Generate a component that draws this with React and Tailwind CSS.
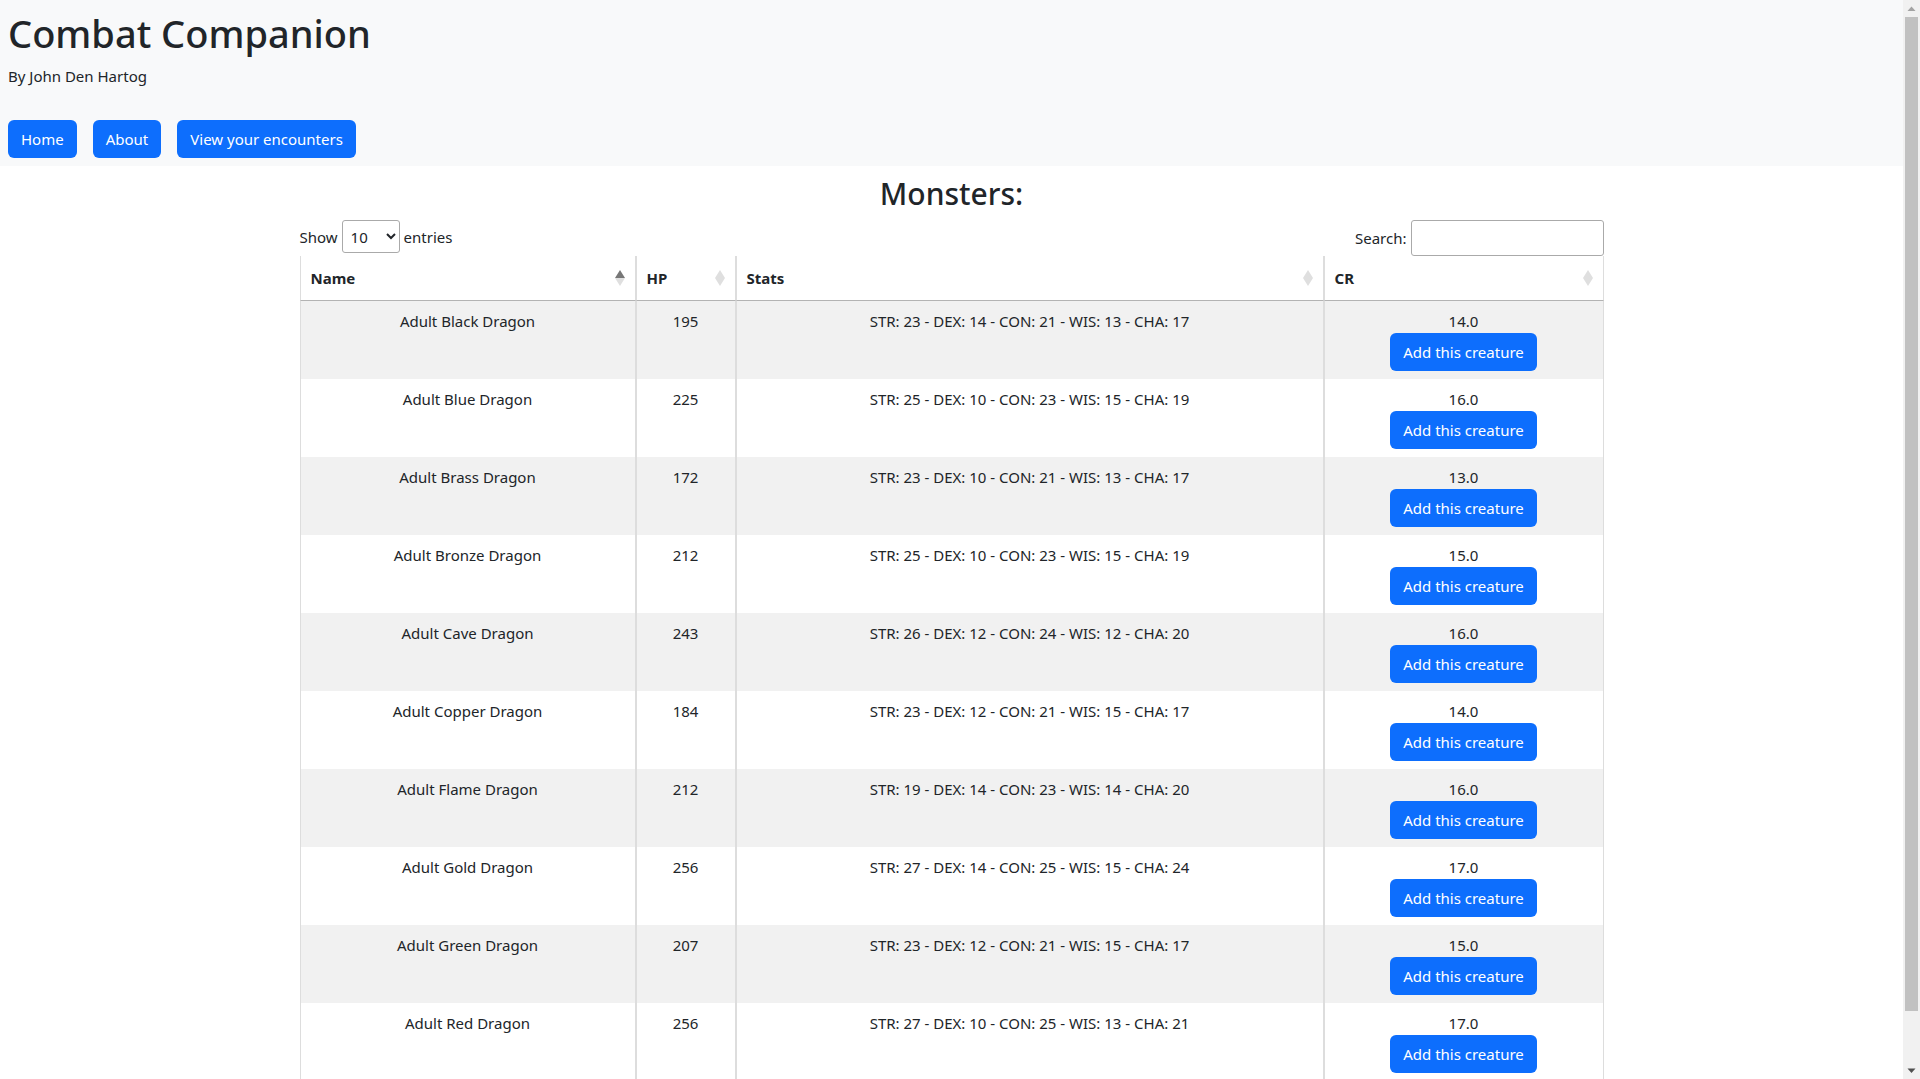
import { useState } from "react";

const monsters = [
  ["Adult Black Dragon", 195, [23, 14, 21, 13, 17], "14.0"],
  ["Adult Blue Dragon", 225, [25, 10, 23, 15, 19], "16.0"],
  ["Adult Brass Dragon", 172, [23, 10, 21, 13, 17], "13.0"],
  ["Adult Bronze Dragon", 212, [25, 10, 23, 15, 19], "15.0"],
  ["Adult Cave Dragon", 243, [26, 12, 24, 12, 20], "16.0"],
  ["Adult Copper Dragon", 184, [23, 12, 21, 15, 17], "14.0"],
  ["Adult Flame Dragon", 212, [19, 14, 23, 14, 20], "16.0"],
  ["Adult Gold Dragon", 256, [27, 14, 25, 15, 24], "17.0"],
  ["Adult Green Dragon", 207, [23, 12, 21, 15, 17], "15.0"],
  ["Adult Red Dragon", 256, [27, 10, 25, 13, 21], "17.0"],
];

const columns = [
  { label: "Name", width: "w-[336px]", sorted: true },
  { label: "HP", width: "w-[100px]" },
  { label: "Stats", width: "" },
  { label: "CR", width: "w-[280px]" },
];

const statNames = ["STR", "DEX", "CON", "WIS", "CHA"];

function formatStats(values) {
  return values.map((v, i) => `${statNames[i]}: ${v}`).join(" - ");
}

function SortIcon({ sorted }) {
  return (
    <svg width="10" height="16" viewBox="0 0 10 16" aria-hidden="true">
      <path d="M5 0 L10 8 H0 Z" fill={sorted ? "#777777" : "#dfdfdf"} />
      <path d="M0 8 H10 L5 16 Z" fill="#dfdfdf" />
    </svg>
  );
}

function NavLink({ children }) {
  return (
    <a
      href="#"
      className="flex h-[38px] items-center rounded-md bg-[#0d6efd] px-[13px] whitespace-nowrap text-white hover:bg-[#0b5ed7]"
    >
      {children}
    </a>
  );
}

function Scrollbar() {
  return (
    <div className="flex w-[17px] shrink-0 flex-col items-center bg-[#f1f1f1]" aria-hidden="true">
      <svg width="17" height="17" viewBox="0 0 17 17">
        <path d="M8.5 6.5 L12.5 11 H4.5 Z" fill="#a3a3a3" />
      </svg>
      <div className="w-[13px] grow-[994] basis-0 bg-[#c1c1c1]" />
      <div className="grow-[51] basis-0" />
      <svg width="17" height="17" viewBox="0 0 17 17">
        <path d="M4.5 6.5 H12.5 L8.5 11 Z" fill="#505050" />
      </svg>
    </div>
  );
}

export default function App() {
  const [query, setQuery] = useState("");
  const visible = monsters.filter(([name]) => name.toLowerCase().includes(query.toLowerCase()));

  return (
    <div className="flex h-screen overflow-hidden bg-white font-['Noto_Sans','Open_Sans',sans-serif] text-[15px] leading-6 text-[#212529]">
      <div className="min-w-0 flex-1 overflow-hidden">
        <header className="bg-[#f8f9fa] p-2">
          <h1 className="mb-1.5 text-[38px] leading-[50px] font-medium">Combat Companion</h1>
          <p className="mb-8">By John Den Hartog</p>
          <nav className="flex gap-4">
            <NavLink>Home</NavLink>
            <NavLink>About</NavLink>
            <NavLink>View your encounters</NavLink>
          </nav>
        </header>

        <main className="mx-auto max-w-[1320px] p-2">
          <h2 className="mb-1.5 text-center text-[30px] leading-[40px] font-medium">Monsters:</h2>

          <div className="flex items-start justify-between">
            <label className="flex items-center gap-1">
              Show
              <select className="h-[33px] w-[58px] rounded-[3px] border border-[#aaaaaa] bg-transparent p-1">
                <option>10</option>
                <option>25</option>
                <option>50</option>
                <option>100</option>
              </select>
              entries
            </label>
            <label className="flex items-center gap-1">
              Search:
              <input
                type="search"
                value={query}
                onChange={(e) => setQuery(e.target.value)}
                className="h-9 w-[193px] rounded-[3px] border border-[#aaaaaa] bg-transparent p-1"
              />
            </label>
          </div>

          <table className="w-full table-fixed border-separate border-spacing-0">
            <thead>
              <tr>
                {columns.map((c) => (
                  <th
                    key={c.label}
                    aria-sort={c.sorted ? "ascending" : undefined}
                    className={`${c.width} border-r border-b border-l border-r-[#dddddd] border-b-[#b3b3b3] border-l-[#dddddd] p-[10px] text-left font-bold`}
                  >
                    <button type="button" className="flex w-full items-center justify-between">
                      {c.label}
                      <SortIcon sorted={c.sorted} />
                    </button>
                  </th>
                ))}
              </tr>
            </thead>
            <tbody>
              {visible.map(([name, hp, stats, cr]) => (
                <tr
                  key={name}
                  className="text-center align-top odd:bg-[#f1f1f1] [&>td]:border-x [&>td]:border-[#dddddd] [&>td]:px-[10px] [&>td]:py-2"
                >
                  <td>{name}</td>
                  <td>{hp}</td>
                  <td>{formatStats(stats)}</td>
                  <td>
                    <div>{cr}</div>
                    <button
                      type="button"
                      className="mx-auto block h-[38px] rounded-md bg-[#0d6efd] px-[13px] text-white hover:bg-[#0b5ed7]"
                    >
                      Add this creature
                    </button>
                  </td>
                </tr>
              ))}
            </tbody>
          </table>
        </main>
      </div>
      <Scrollbar />
    </div>
  );
}
